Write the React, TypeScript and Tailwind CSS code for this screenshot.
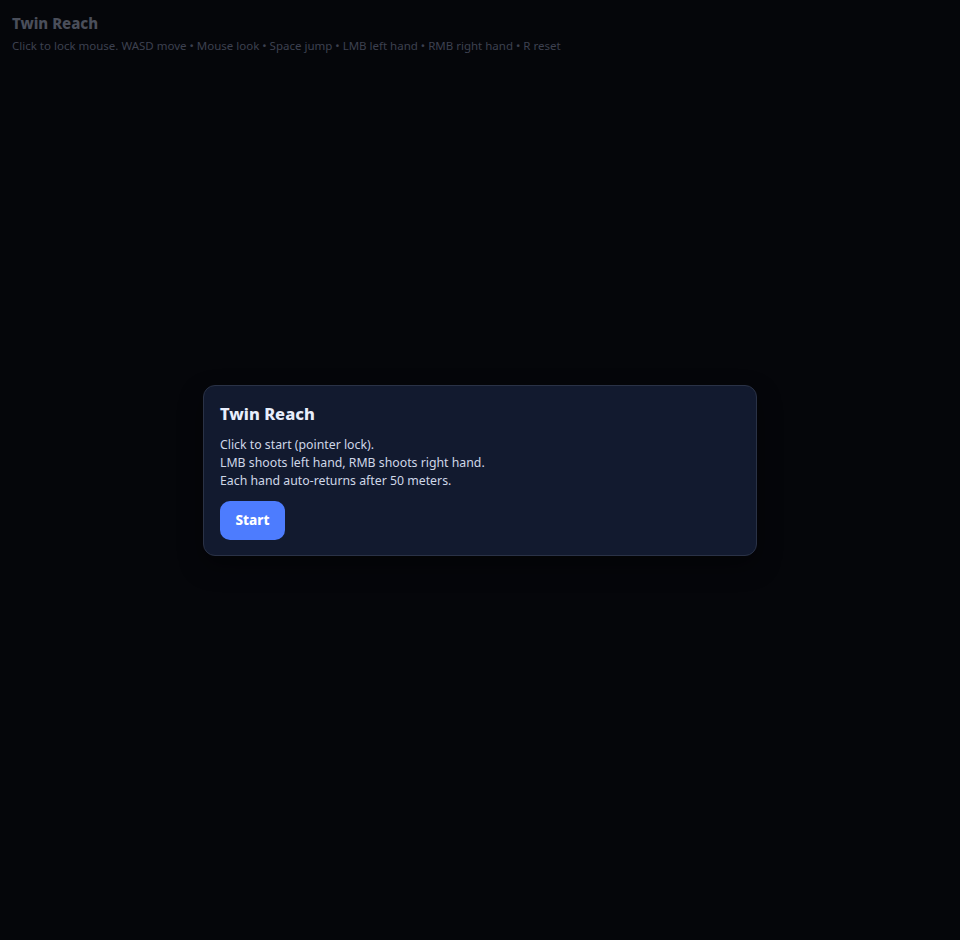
export default function App() {
  return (
    <div
      className="relative h-screen w-full overflow-hidden bg-[#05060a]"
      style={{ fontFamily: '"Noto Sans", "Open Sans", sans-serif' }}
    >
      {/* HUD */}
      <div className="absolute left-3 top-3 select-none">
        <div className="text-[15px] font-extrabold leading-[22px] text-[#4a4e5a]">Twin Reach</div>
        <div className="mt-[4px] text-[11.5px] leading-4 text-[#3d4150]">
          Click to lock mouse. WASD move • Mouse look • Space jump • LMB left hand • RMB right hand • R reset
        </div>
      </div>

      {/* start overlay */}
      <div className="absolute inset-0 flex items-center justify-center">
        <div className="w-[554px] rounded-xl border border-[#2a3246] bg-[#121a2f] px-4 pb-[15px] pt-4 shadow-[0_10px_24px_rgba(0,0,0,0.4)]">
          <h1 className="text-[16.5px] font-extrabold leading-6 text-[#e8eefc]">Twin Reach</h1>
          <div className="mt-[10px] text-[12.3px] leading-[18px] text-[#cfd7e8]">
            <div>Click to start (pointer lock).</div>
            <div>LMB shoots left hand, RMB shoots right hand.</div>
            <div>Each hand auto-returns after 50 meters.</div>
          </div>
          <button className="mt-[11px] h-[39px] w-[65px] rounded-[10px] bg-[#4d7cfe] text-[13.5px] font-extrabold text-white">
            Start
          </button>
        </div>
      </div>
    </div>
  );
}
